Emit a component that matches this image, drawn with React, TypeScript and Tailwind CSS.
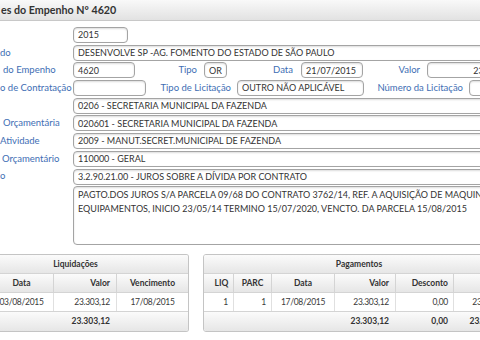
import React from "react";

const inputBase =
  "h-full shrink-0 rounded-[4px] border border-[#a4a4a4] bg-white px-[4px] flex items-center text-[9px] text-[#333] shadow-[inset_0_1px_2px_rgba(0,0,0,0.14)] whitespace-nowrap overflow-hidden";
const lbl = "text-[9.5px] text-[#3e6eb4] whitespace-nowrap";

function Field({ w, children, right }: { w: string; children?: React.ReactNode; right?: boolean }) {
  return <div className={`${inputBase} ${w} ${right ? "justify-end" : ""}`}>{children}</div>;
}

function Row({ label, pl, children }: { label?: string; pl?: string; children: React.ReactNode }) {
  return (
    <div className="flex h-[16px] items-center">
      <div className={`w-[73px] shrink-0 ${lbl} ${pl ?? ""}`}>{label}</div>
      {children}
    </div>
  );
}

const tbl = "text-[8.5px] text-[#333]";
const dataRow = "tracking-[-0.3px] text-[#3a3a3a]";
const headGrad = "bg-linear-to-b from-[#fbfbfb] to-[#e6e6e6]";

export default function App() {
  return (
    <div className="w-[480px] h-[340px] overflow-hidden bg-white font-[family-name:Lato,sans-serif]">
      <div className="h-[21px] border-b border-[#c8c8c8] bg-linear-to-b from-[#f9f9f9] to-[#e2e2e2] pl-[1px] text-[10.7px] font-bold leading-[20px] text-[#333] whitespace-nowrap">
        es do Empenho Nº 4620
      </div>
      <div className="flex flex-col gap-[1.7px] pt-[6px]">
        <Row>
          <Field w="w-[55px]">2015</Field>
        </Row>
        <Row label="do">
          <Field w="w-[430px]">DESENVOLVE SP -AG. FOMENTO DO ESTADO DE SÃO PAULO</Field>
        </Row>
        <Row label="do Empenho" pl="pl-[3px]">
          <Field w="w-[62px]">4620</Field>
          <div className={`w-[69px] shrink-0 pr-[7px] text-right ${lbl}`}>Tipo</div>
          <Field w="w-[23px]">OR</Field>
          <div className={`w-[74px] shrink-0 pr-[8px] text-right ${lbl}`}>Data</div>
          <Field w="w-[62px]">21/07/2015</Field>
          <div className={`w-[64px] shrink-0 pr-[7px] text-right ${lbl}`}>Valor</div>
          <Field w="w-[92px]" right>23.303,12</Field>
        </Row>
        <Row label="o de Contratação">
          <Field w="w-[73px]" />
          <div className={`w-[91px] shrink-0 pr-[6px] text-right ${lbl}`}>Tipo de Licitação</div>
          <Field w="w-[127px]">OUTRO NÃO APLICÁVEL</Field>
          <div className={`w-[105px] shrink-0 pr-[6px] text-right ${lbl}`}>Número da Licitação</div>
          <Field w="w-[60px]" />
        </Row>
        <Row>
          <Field w="w-[430px]">0206 - SECRETARIA MUNICIPAL DA FAZENDA</Field>
        </Row>
        <Row label="Orçamentária" pl="pl-[3px]">
          <Field w="w-[430px]">020601 - SECRETARIA MUNICIPAL DA FAZENDA</Field>
        </Row>
        <Row label="Atividade">
          <Field w="w-[430px]">2009 - MANUT.SECRET.MUNICIPAL DE FAZENDA</Field>
        </Row>
        <Row label="Orçamentário" pl="pl-[2px]">
          <Field w="w-[430px]">110000 - GERAL</Field>
        </Row>
        <Row label="o">
          <Field w="w-[430px]">3.2.90.21.00 - JUROS SOBRE A DÍVIDA POR CONTRATO</Field>
        </Row>
        <div className="flex">
          <div className="w-[73px] shrink-0" />
          <div className="h-[59px] w-[430px] shrink-0 rounded-[4px] border border-[#a4a4a4] bg-white px-[4px] pt-[1px] text-[9px] leading-[14px] text-[#333] shadow-[inset_0_1px_2px_rgba(0,0,0,0.14)] whitespace-nowrap overflow-hidden">
            <div>PAGTO.DOS JUROS S/A PARCELA 09/68 DO CONTRATO 3762/14, REF. A AQUISIÇÃO DE MAQUINAS E</div>
            <div>EQUIPAMENTOS, INICIO 23/05/14 TERMINO 15/07/2020, VENCTO. DA PARCELA 15/08/2015</div>
          </div>
        </div>
      </div>

      <div className={`mt-[9px] flex gap-[14px] ${tbl}`}>
        <div className="w-[189px] shrink-0 overflow-hidden rounded-r-[3px] border border-l-0 border-[#c4c4c4]">
          <div className={`flex h-[18px] items-center justify-center pr-[37px] font-bold ${headGrad}`}>Liquidações</div>
          <div className={`flex h-[19px] border-t border-[#d4d4d4] font-bold ${headGrad}`}>
            <div className="flex w-[53px] items-center justify-center pr-[10px]">Data</div>
            <div className="flex w-[63px] items-center justify-end border-l border-[#d4d4d4] pr-[6px]">Valor</div>
            <div className="flex flex-1 items-center justify-center border-l border-[#d4d4d4]">Vencimento</div>
          </div>
          <div className={`flex h-[19px] border-t border-[#d4d4d4] bg-white ${dataRow}`}>
            <div className="flex w-[53px] items-center justify-center pr-[10px]">03/08/2015</div>
            <div className="flex w-[63px] items-center justify-end border-l border-[#e0e0e0] pr-[6px]">23.303,12</div>
            <div className="flex flex-1 items-center justify-center border-l border-[#e0e0e0]">17/08/2015</div>
          </div>
          <div className={`flex h-[20px] border-t border-[#d4d4d4] font-bold ${headGrad}`}>
            <div className="w-[53px]" />
            <div className="flex w-[63px] items-center justify-end pr-[6px]">23.303,12</div>
          </div>
        </div>

        <div className="w-[312px] shrink-0 overflow-hidden rounded-l-[3px] border border-[#c4c4c4]">
          <div className={`flex h-[18px] items-center justify-center font-bold ${headGrad}`}>Pagamentos</div>
          <div className={`flex h-[19px] border-t border-[#d4d4d4] font-bold ${headGrad}`}>
            <div className="flex w-[29px] items-center justify-center pl-[6px]">LIQ</div>
            <div className="flex w-[38px] items-center justify-center border-l border-[#d4d4d4]">PARC</div>
            <div className="flex w-[63px] items-center justify-center border-l border-[#d4d4d4]">Data</div>
            <div className="flex w-[61px] items-center justify-end border-l border-[#d4d4d4] pr-[6px]">Valor</div>
            <div className="flex w-[58px] items-center justify-end border-l border-[#d4d4d4] pr-[5px]">Desconto</div>
            <div className="flex-1 border-l border-[#d4d4d4]" />
          </div>
          <div className={`flex h-[19px] border-t border-[#d4d4d4] bg-white ${dataRow}`}>
            <div className="flex w-[29px] items-center justify-end pr-[5px]">1</div>
            <div className="flex w-[38px] items-center justify-end border-l border-[#e0e0e0] pr-[5px]">1</div>
            <div className="flex w-[63px] items-center justify-center border-l border-[#e0e0e0]">17/08/2015</div>
            <div className="flex w-[61px] items-center justify-end border-l border-[#e0e0e0] pr-[6px]">23.303,12</div>
            <div className="flex w-[58px] items-center justify-end border-l border-[#e0e0e0] pr-[5px]">0,00</div>
            <div className="flex flex-1 items-center justify-end border-l border-[#e0e0e0] pr-[6px]">23.303,12</div>
          </div>
          <div className={`flex h-[20px] border-t border-[#d4d4d4] font-bold ${headGrad}`}>
            <div className="w-[130px]" />
            <div className="flex w-[61px] items-center justify-end pr-[6px]">23.303,12</div>
            <div className="flex w-[58px] items-center justify-end pr-[5px]">0,00</div>
            <div className="flex flex-1 items-center justify-end pr-[6px]">23.303,12</div>
          </div>
        </div>
      </div>
    </div>
  );
}
